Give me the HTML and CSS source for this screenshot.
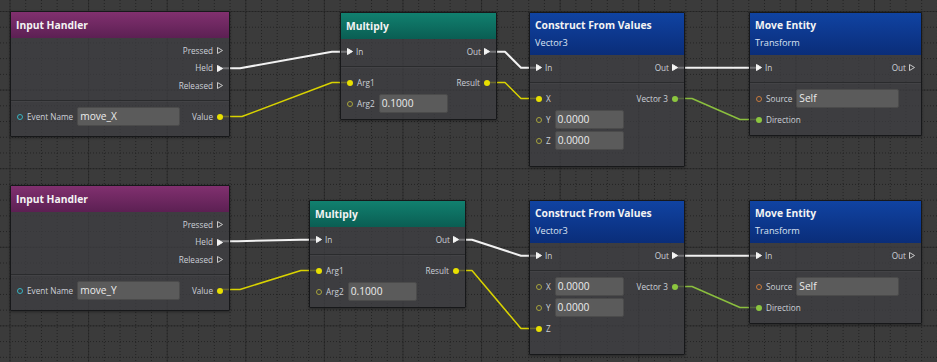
FILE: index.html
```html
<!DOCTYPE html>
<html>
<head>
<meta charset="utf-8">
<title>Script Canvas</title>
<link rel="stylesheet" href="styles.css">
</head>
<body>
<div class="canvas">
  <svg class="wires" width="937" height="362" viewBox="0 0 937 362">
    <g class="wire wire--exec">
      <polyline points="220,68.25 240,68.25 332,51.75 350,51.75"/>
      <polyline points="487,51.75 505,51.75 521,67.75 539,67.75"/>
      <polyline points="675,67.75 759,67.75"/>
      <polyline points="220,241.25 238,241.25 301,239.75 319,239.75"/>
      <polyline points="456,239.75 472,239.75 521,255.75 539,255.75"/>
      <polyline points="675,255.75 759,255.75"/>
    </g>
    <g class="wire wire--num">
      <polyline points="220,116.5 242,116.5 332,82.5 350,82.5"/>
      <polyline points="487,82.5 505,82.5 521,98.5 539,98.5"/>
      <polyline points="220,289.5 240,289.5 301,270.5 319,270.5"/>
      <polyline points="456,270.5 472,270.5 521,328.5 539,328.5"/>
    </g>
    <g class="wire wire--vec">
      <polyline points="675,98.5 692,98.5 740,119.5 759,119.5"/>
      <polyline points="675,286.5 692,286.5 740,307.5 759,307.5"/>
    </g>
  </svg>

  <!-- Row 1 -->
  <div class="node node--ih pos-ih1">
    <div class="head head--purple"><div class="title">Input Handler</div></div>
    <div class="exec">
      <div class="row row--end"><span class="label">Pressed</span><svg class="tri tri--open" viewBox="0 0 6 7"><path d="M.5 .5 5.5 3.5 .5 6.5Z"/></svg></div>
      <div class="row row--end"><span class="label">Held</span><svg class="tri tri--full" viewBox="0 0 6 7"><path d="M.5 .5 5.5 3.5 .5 6.5Z"/></svg></div>
      <div class="row row--end"><span class="label">Released</span><svg class="tri tri--open" viewBox="0 0 6 7"><path d="M.5 .5 5.5 3.5 .5 6.5Z"/></svg></div>
    </div>
    <div class="data">
      <div class="col">
        <div class="row"><span class="pin pin--open c-teal"></span><span class="label">Event Name</span><span class="field field--wide">move_X</span></div>
      </div>
      <div class="col col--out">
        <div class="row"><span class="label">Value</span><span class="pin pin--full c-yellow"></span></div>
      </div>
    </div>
  </div>

  <div class="node node--mul pos-mul1">
    <div class="head head--teal"><div class="title">Multiply</div></div>
    <div class="exec">
      <div class="row row--split">
        <span class="port"><svg class="tri tri--full" viewBox="0 0 6 7"><path d="M.5 .5 5.5 3.5 .5 6.5Z"/></svg><span class="label">In</span></span>
        <span class="port"><span class="label">Out</span><svg class="tri tri--full" viewBox="0 0 6 7"><path d="M.5 .5 5.5 3.5 .5 6.5Z"/></svg></span>
      </div>
    </div>
    <div class="data">
      <div class="col">
        <div class="row"><span class="pin pin--full c-yellow"></span><span class="label">Arg1</span></div>
        <div class="row"><span class="pin pin--open c-olive"></span><span class="label">Arg2</span><span class="field field--short">0.1000</span></div>
      </div>
      <div class="col col--out">
        <div class="row"><span class="label">Result</span><span class="pin pin--full c-yellow"></span></div>
      </div>
    </div>
  </div>

  <div class="node node--cfv pos-cfv1">
    <div class="head head--blue head--sub"><div class="title">Construct From Values</div><div class="subtitle">Vector3</div></div>
    <div class="exec">
      <div class="row row--split">
        <span class="port"><svg class="tri tri--full" viewBox="0 0 6 7"><path d="M.5 .5 5.5 3.5 .5 6.5Z"/></svg><span class="label">In</span></span>
        <span class="port"><span class="label">Out</span><svg class="tri tri--full" viewBox="0 0 6 7"><path d="M.5 .5 5.5 3.5 .5 6.5Z"/></svg></span>
      </div>
    </div>
    <div class="data">
      <div class="col">
        <div class="row"><span class="pin pin--full c-yellow"></span><span class="label">X</span></div>
        <div class="row"><span class="pin pin--open c-olive"></span><span class="label">Y</span><span class="field field--short">0.0000</span></div>
        <div class="row"><span class="pin pin--open c-olive"></span><span class="label">Z</span><span class="field field--short">0.0000</span></div>
      </div>
      <div class="col col--out">
        <div class="row"><span class="label">Vector 3</span><span class="pin pin--full c-green"></span></div>
      </div>
    </div>
  </div>

  <div class="node node--mov pos-mov1">
    <div class="head head--blue head--sub"><div class="title">Move Entity</div><div class="subtitle">Transform</div></div>
    <div class="exec">
      <div class="row row--split">
        <span class="port"><svg class="tri tri--full" viewBox="0 0 6 7"><path d="M.5 .5 5.5 3.5 .5 6.5Z"/></svg><span class="label">In</span></span>
        <span class="port"><span class="label">Out</span><svg class="tri tri--open" viewBox="0 0 6 7"><path d="M.5 .5 5.5 3.5 .5 6.5Z"/></svg></span>
      </div>
    </div>
    <div class="data">
      <div class="col">
        <div class="row"><span class="pin pin--open c-orange"></span><span class="label">Source</span><span class="field field--wide">Self</span></div>
        <div class="row"><span class="pin pin--full c-green"></span><span class="label">Direction</span></div>
      </div>
    </div>
  </div>

  <!-- Row 2 -->
  <div class="node node--ih pos-ih2">
    <div class="head head--purple"><div class="title">Input Handler</div></div>
    <div class="exec">
      <div class="row row--end"><span class="label">Pressed</span><svg class="tri tri--open" viewBox="0 0 6 7"><path d="M.5 .5 5.5 3.5 .5 6.5Z"/></svg></div>
      <div class="row row--end"><span class="label">Held</span><svg class="tri tri--full" viewBox="0 0 6 7"><path d="M.5 .5 5.5 3.5 .5 6.5Z"/></svg></div>
      <div class="row row--end"><span class="label">Released</span><svg class="tri tri--open" viewBox="0 0 6 7"><path d="M.5 .5 5.5 3.5 .5 6.5Z"/></svg></div>
    </div>
    <div class="data">
      <div class="col">
        <div class="row"><span class="pin pin--open c-teal"></span><span class="label">Event Name</span><span class="field field--wide">move_Y</span></div>
      </div>
      <div class="col col--out">
        <div class="row"><span class="label">Value</span><span class="pin pin--full c-yellow"></span></div>
      </div>
    </div>
  </div>

  <div class="node node--mul pos-mul2">
    <div class="head head--teal"><div class="title">Multiply</div></div>
    <div class="exec">
      <div class="row row--split">
        <span class="port"><svg class="tri tri--full" viewBox="0 0 6 7"><path d="M.5 .5 5.5 3.5 .5 6.5Z"/></svg><span class="label">In</span></span>
        <span class="port"><span class="label">Out</span><svg class="tri tri--full" viewBox="0 0 6 7"><path d="M.5 .5 5.5 3.5 .5 6.5Z"/></svg></span>
      </div>
    </div>
    <div class="data">
      <div class="col">
        <div class="row"><span class="pin pin--full c-yellow"></span><span class="label">Arg1</span></div>
        <div class="row"><span class="pin pin--open c-olive"></span><span class="label">Arg2</span><span class="field field--short">0.1000</span></div>
      </div>
      <div class="col col--out">
        <div class="row"><span class="label">Result</span><span class="pin pin--full c-yellow"></span></div>
      </div>
    </div>
  </div>

  <div class="node node--cfv pos-cfv2">
    <div class="head head--blue head--sub"><div class="title">Construct From Values</div><div class="subtitle">Vector3</div></div>
    <div class="exec">
      <div class="row row--split">
        <span class="port"><svg class="tri tri--full" viewBox="0 0 6 7"><path d="M.5 .5 5.5 3.5 .5 6.5Z"/></svg><span class="label">In</span></span>
        <span class="port"><span class="label">Out</span><svg class="tri tri--full" viewBox="0 0 6 7"><path d="M.5 .5 5.5 3.5 .5 6.5Z"/></svg></span>
      </div>
    </div>
    <div class="data">
      <div class="col">
        <div class="row"><span class="pin pin--open c-olive"></span><span class="label">X</span><span class="field field--short">0.0000</span></div>
        <div class="row"><span class="pin pin--open c-olive"></span><span class="label">Y</span><span class="field field--short">0.0000</span></div>
        <div class="row"><span class="pin pin--full c-yellow"></span><span class="label">Z</span></div>
      </div>
      <div class="col col--out">
        <div class="row"><span class="label">Vector 3</span><span class="pin pin--full c-green"></span></div>
      </div>
    </div>
  </div>

  <div class="node node--mov pos-mov2">
    <div class="head head--blue head--sub"><div class="title">Move Entity</div><div class="subtitle">Transform</div></div>
    <div class="exec">
      <div class="row row--split">
        <span class="port"><svg class="tri tri--full" viewBox="0 0 6 7"><path d="M.5 .5 5.5 3.5 .5 6.5Z"/></svg><span class="label">In</span></span>
        <span class="port"><span class="label">Out</span><svg class="tri tri--open" viewBox="0 0 6 7"><path d="M.5 .5 5.5 3.5 .5 6.5Z"/></svg></span>
      </div>
    </div>
    <div class="data">
      <div class="col">
        <div class="row"><span class="pin pin--open c-orange"></span><span class="label">Source</span><span class="field field--wide">Self</span></div>
        <div class="row"><span class="pin pin--full c-green"></span><span class="label">Direction</span></div>
      </div>
    </div>
  </div>
</div>
</body>
</html>
```

FILE: styles.css
```css
* { box-sizing: border-box; }

html, body {
  margin: 0;
  padding: 0;
  background: #3a3a3a;
}

.canvas {
  position: relative;
  width: 937px;
  height: 362px;
  overflow: hidden;
  font-family: "Open Sans", "DejaVu Sans", sans-serif;
  background-color: #3b3b3b;
  background-image:
    linear-gradient(to right, #2d2d2d 1px, transparent 1px),
    linear-gradient(to bottom, #2d2d2d 1px, transparent 1px);
  background-size: 78.6px 78.6px;
  background-position: 9.5px 11px;
}

/* dotted minor grid lines */
.canvas::before,
.canvas::after {
  content: "";
  position: absolute;
  inset: 0;
  z-index: 0;
}

.canvas::before {
  background-image: linear-gradient(to right, #232323 1px, transparent 1px);
  background-size: 15.72px 100%;
  background-position: 9.5px 0;
  -webkit-mask-image: linear-gradient(to bottom, #000 1px, transparent 1px);
  -webkit-mask-size: 100% 3px;
  mask-image: linear-gradient(to bottom, #000 1px, transparent 1px);
  mask-size: 100% 3px;
}

.canvas::after {
  background-image: linear-gradient(to bottom, #232323 1px, transparent 1px);
  background-size: 100% 15.72px;
  background-position: 0 11px;
  -webkit-mask-image: linear-gradient(to right, #000 1px, transparent 1px);
  -webkit-mask-size: 3px 100%;
  mask-image: linear-gradient(to right, #000 1px, transparent 1px);
  mask-size: 3px 100%;
}

/* wires */
.wires {
  position: absolute;
  left: 0;
  top: 0;
  z-index: 1;
  display: block;
}

.wire polyline {
  fill: none;
  stroke-linejoin: round;
  stroke-linecap: butt;
}

.wire--exec polyline { stroke: #f2f2f2; stroke-width: 2; }
.wire--num polyline { stroke: #d9d300; stroke-width: 1.5; }
.wire--vec polyline { stroke: #8bbf3e; stroke-width: 1.5; }

/* nodes */
.node {
  position: absolute;
  z-index: 2;
  border: 1px solid #17181a;
  border-radius: 1px;
  background: rgba(62, 63, 66, 0.72);
  box-shadow: 0 1px 3px rgba(0, 0, 0, 0.35);
}

.node--ih { width: 220px; }
.node--mul { width: 157px; }
.node--cfv { width: 156px; }
.node--mov { width: 173px; }

.pos-ih1 { left: 10px; top: 11px; }
.pos-mul1 { left: 340px; top: 12px; }
.pos-cfv1 { left: 529px; top: 12px; }
.pos-mov1 { left: 749px; top: 12px; }
.pos-ih2 { left: 10px; top: 185px; }
.pos-mul2 { left: 309px; top: 200px; }
.pos-cfv2 { left: 529px; top: 200px; }
.pos-mov2 { left: 749px; top: 200px; }

.head {
  height: 26px;
  padding: 6px 5px 0;
}

.head--sub {
  height: 42px;
  padding-top: 5px;
}

.head--purple { background: linear-gradient(to bottom, #81306f, #5c2053); }
.head--teal { background: linear-gradient(to bottom, #11806f, #0a5e53); }
.head--blue { background: linear-gradient(to bottom, #1043a2, #0a2d79); }

.title {
  font-size: 10.3px;
  font-weight: 700;
  line-height: 14px;
  color: #f3f3f3;
  white-space: nowrap;
}

.subtitle {
  margin-top: 5px;
  font-size: 9.2px;
  line-height: 12px;
  color: #dde4f2;
  white-space: nowrap;
}

.exec {
  padding: 4px 6px 5.5px;
}

.exec .row {
  height: 17.5px;
}

.data {
  display: flex;
  justify-content: space-between;
  border-top: 1px solid #2a2b2d;
  box-shadow: inset 0 1px 0 rgba(255, 255, 255, 0.03);
  padding: 5px 6px 5px;
}

.node--ih .data { padding-bottom: 9px; }
.node--cfv .data { padding-bottom: 15px; }

.col {
  display: flex;
  flex-direction: column;
}

.col--out { align-items: flex-end; }

.data .row { height: 21px; }

.row {
  display: flex;
  align-items: center;
  gap: 4px;
}

.row--end { justify-content: flex-end; }
.row--split { justify-content: space-between; }

.port {
  display: flex;
  align-items: center;
  gap: 3px;
}

.label {
  font-size: 8.2px;
  line-height: 10px;
  color: #ccd0d8;
  white-space: nowrap;
}

.tri {
  width: 6px;
  height: 7px;
  flex: none;
  display: block;
}

.tri path { stroke-width: 1; stroke-linejoin: miter; }
.tri--open path { fill: none; stroke: #c9c9c9; }
.tri--full path { fill: #f4f4f4; stroke: #f4f4f4; }

.pin {
  width: 6px;
  height: 6px;
  border-radius: 50%;
  flex: none;
}

.pin--open { border: 1px solid currentColor; }
.pin--full { background: currentColor; }

.c-yellow { color: #e8e000; }
.c-olive { color: #a8a43c; }
.c-teal { color: #38b4c2; }
.c-orange { color: #c97a3c; }
.c-green { color: #8cc63f; }

.field {
  height: 19px;
  padding: 0 2px;
  background: #5b5b5b;
  border: 1px solid #4b4b4b;
  border-radius: 2px;
  font-size: 10.2px;
  line-height: 17px;
  color: #ececec;
  white-space: nowrap;
}

.field--wide { width: 103px; }
.field--short { width: 69px; }
```
